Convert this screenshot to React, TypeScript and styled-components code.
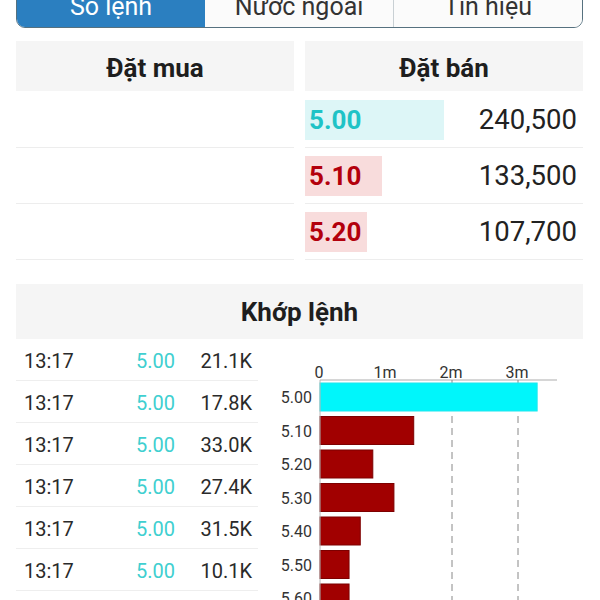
import styled, { createGlobalStyle } from "styled-components";

const GlobalStyle = createGlobalStyle`
    body {
        margin: 0;
        background: #ffffff;
        font-family: Roboto, "Noto Sans", sans-serif;
        color: #222;
    }
`

interface Ask {
    price: string;
    volume: number;
    up: boolean;
}

const asks: Ask[] = [
    { price: "5.00", volume: 240500, up: true },
    { price: "5.10", volume: 133500, up: false },
    { price: "5.20", volume: 107700, up: false },
];

const trades = [
    { time: "13:17", price: "5.00", vol: "21.1K" },
    { time: "13:17", price: "5.00", vol: "17.8K" },
    { time: "13:17", price: "5.00", vol: "33.0K" },
    { time: "13:17", price: "5.00", vol: "27.4K" },
    { time: "13:17", price: "5.00", vol: "31.5K" },
    { time: "13:17", price: "5.00", vol: "10.1K" },
];

// volume per price level, in millions
const levels = [
    { price: "5.00", vol: 3.29, up: true },
    { price: "5.10", vol: 1.42, up: false },
    { price: "5.20", vol: 0.8, up: false },
    { price: "5.30", vol: 1.12, up: false },
    { price: "5.40", vol: 0.61, up: false },
    { price: "5.50", vol: 0.44, up: false },
    { price: "5.60", vol: 0.44, up: false },
];

function VolumeChart() {
    const x0 = 62;
    const perM = 66;
    const top = 44;
    const pitch = 33.5;
    return (
        <svg width="325" height="262" viewBox="0 0 325 262">
            <line x1={x0} y1={41} x2={299} y2={41} stroke="#c8c8c8" strokeWidth="1.5" />
            <line x1={x0 + 2 * perM} y1={41} x2={x0 + 2 * perM} y2={262} stroke="#888" strokeWidth="1" strokeDasharray="7 5" />
            <line x1={x0 + 3 * perM} y1={41} x2={x0 + 3 * perM} y2={262} stroke="#888" strokeWidth="1" strokeDasharray="7 5" />
            {["0", "1m", "2m", "3m"].map((t, i) => (
                <text key={t} x={x0 + i * perM - 1} y={39} textAnchor="middle" fontSize="16" fill="#333" fontFamily="Roboto, sans-serif">{t}</text>
            ))}
            {levels.map((l, i) => {
                const y = top + i * pitch;
                return (
                    <g key={l.price}>
                        <rect x={x0} y={y} width={l.vol * perM} height={28}
                            fill={l.up ? "#00f6fb" : "#a10000"}
                            stroke={l.up ? "#1fe6ee" : "#7d0000"} strokeWidth="1" />
                        <text x={54} y={y + 20} textAnchor="end" fontSize="16" fill="#333" fontFamily="Roboto, sans-serif">{l.price}</text>
                    </g>
                );
            })}
            <line x1={x0} y1={41} x2={x0} y2={262} stroke="#b8b8b8" strokeWidth="1" />
        </svg>
    );
}

export default function App() {
    const maxVol = Math.max(...asks.map(a => a.volume));
    return (
        <>
            <GlobalStyle />
            <Page>
                <TabBar>
                    <Tab active>Sổ lệnh</Tab>
                    <Tab>Nước ngoài</Tab>
                    <Tab last>Tín hiệu</Tab>
                </TabBar>

                <OrderBook>
                    <Side>
                        <SectionHeader>Đặt mua</SectionHeader>
                        <BookRow />
                        <BookRow />
                        <BookRow />
                    </Side>
                    <Side>
                        <SectionHeader>Đặt bán</SectionHeader>
                        {asks.map(a => (
                            <BookRow key={a.price}>
                                <PriceBox up={a.up} style={{ width: `${(a.volume / maxVol) * 50}%` }}>
                                    {a.price}
                                </PriceBox>
                                <Volume>{a.volume.toLocaleString("en-US")}</Volume>
                            </BookRow>
                        ))}
                    </Side>
                </OrderBook>

                <MatchHeader>Khớp lệnh</MatchHeader>
                <MatchBody>
                    <TradeList>
                        {trades.map((t, i) => (
                            <TradeRow key={i}>
                                <span>{t.time}</span>
                                <TradePrice>{t.price}</TradePrice>
                                <TradeVol>{t.vol}</TradeVol>
                            </TradeRow>
                        ))}
                    </TradeList>
                    <ChartBox>
                        <VolumeChart />
                    </ChartBox>
                </MatchBody>
            </Page>
        </>
    );
}

const Page = styled.div`
    width: 600px;
    height: 600px;
    overflow: hidden;
    box-sizing: border-box;
    padding: 0 17px 0 16px;
`

const TabBar = styled.div`
    margin-top: -16px;
    height: 44px;
    display: flex;
    border: 1.5px solid #56717f;
    border-radius: 9px;
    overflow: hidden;
    box-sizing: border-box;
`

const Tab = styled.div<{ active?: boolean; last?: boolean }>`
    flex: 1;
    display: flex;
    align-items: center;
    justify-content: center;
    font-size: 25px;
    color: ${p => (p.active ? "#ffffff" : "#333333")};
    background: ${p => (p.active ? "#2b7fc0" : "#fbfbfb")};
    border-right: ${p => (p.active || p.last ? "none" : "1px solid #c9d0d4")};
`

const OrderBook = styled.div`
    margin-top: 13px;
    display: grid;
    grid-template-columns: 1fr 1fr;
    gap: 11px;
`

const Side = styled.div`
    display: flex;
    flex-direction: column;
`

const SectionHeader = styled.div`
    height: 50px;
    display: flex;
    align-items: center;
    justify-content: center;
    padding-top: 3px;
    box-sizing: border-box;
    background: #f5f5f5;
    font-size: 26px;
    font-weight: 700;
    color: #1e1e1e;
    margin-bottom: 1px;
`

const BookRow = styled.div`
    height: 55px;
    border-bottom: 1px solid #ededed;
    display: flex;
    align-items: center;
    justify-content: space-between;
`

const PriceBox = styled.div<{ up: boolean }>`
    height: 40px;
    display: flex;
    align-items: center;
    box-sizing: border-box;
    padding-left: 4px;
    font-size: 26px;
    font-weight: 700;
    color: ${p => (p.up ? "#1fc3c6" : "#b3000c")};
    background: ${p => (p.up ? "#ddf6f7" : "#f8dcdc")};
`

const Volume = styled.div`
    font-size: 27.5px;
    color: #222;
    padding-right: 6px;
`

const MatchHeader = styled.div`
    margin-top: 24px;
    height: 55px;
    display: flex;
    align-items: center;
    justify-content: center;
    background: #f5f5f5;
    font-size: 26px;
    font-weight: 700;
    color: #1e1e1e;
`

const MatchBody = styled.div`
    display: grid;
    grid-template-columns: 242px 1fr;
`

const TradeList = styled.div`
    display: flex;
    flex-direction: column;
`

const TradeRow = styled.div`
    height: 42px;
    box-sizing: border-box;
    border-bottom: 1px solid #eeeeee;
    padding: 2px 6px 0 8px;
    display: grid;
    grid-template-columns: 1fr 60px 77px;
    align-items: center;
    font-size: 20px;
    color: #2a2a2a;
`

const TradePrice = styled.span`
    color: #40cfd0;
    text-align: right;
`

const TradeVol = styled.span`
    text-align: right;
`

const ChartBox = styled.div`
    margin-right: -17px;
`
